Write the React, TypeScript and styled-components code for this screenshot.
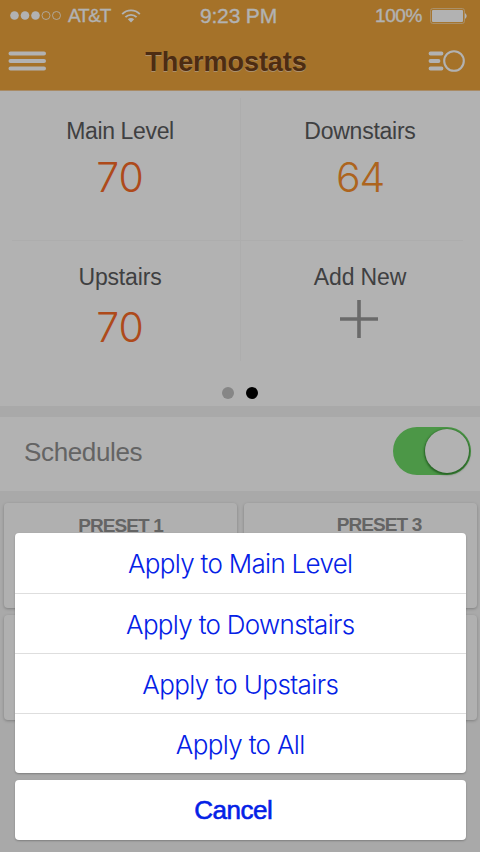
import React from "react";
import styled, { createGlobalStyle } from "styled-components";

const GlobalStyle = createGlobalStyle`
  *, *::before, *::after { box-sizing: border-box; }
  html, body { margin: 0; padding: 0; background: #f2f2f2; }
  body { font-family: "Liberation Sans", Arial, sans-serif; }
  button { font: inherit; border: 0; padding: 0; background: none; }
`;

const Phone = styled.div`
  position: relative;
  width: 480px;
  height: 852px;
  overflow: hidden;
  background: #f2f2f2;
`;

const Header = styled.header`
  height: 91px;
  background: #eca43c;
  border-bottom: 1px solid #f2c791;
  color: #fff;
`;

const StatusBar = styled.div`
  display: grid;
  grid-template-columns: 1fr auto 1fr;
  align-items: center;
  height: 31px;
  padding: 0 13px 0 10px;
`;

const StatusGroup = styled.div<{ $end?: boolean }>`
  display: flex;
  align-items: center;
  justify-content: ${(p) => (p.$end ? "flex-end" : "flex-start")};
`;

const StatusText = styled.span<{ $size: number; $spacing?: number }>`
  font-size: ${(p) => p.$size}px;
  letter-spacing: ${(p) => p.$spacing ?? 0}px;
  line-height: 31px;
  white-space: nowrap;
  -webkit-text-stroke: 0.3px #fff;
`;

const Carrier = styled(StatusText)`
  margin: 0 11px 0 7px;
`;

const Battery = styled.svg`
  margin-left: 8px;
`;

const NavBar = styled.nav`
  display: flex;
  align-items: center;
  justify-content: space-between;
  height: 59px;
  padding: 0 14px 0 8px;
`;

const IconButton = styled.button`
  display: flex;
  width: 39px;
`;

const Title = styled.h1`
  margin: 3px 22px 0 0;
  font-size: 27px;
  line-height: 34px;
  letter-spacing: -0.05px;
  font-weight: 700;
  color: #6f401a;
  text-shadow: 0 1px 0 #f5cf9c;
`;

const Zones = styled.section`
  height: 315px;
  background: #fff;
`;

const ZoneGrid = styled.div`
  display: grid;
  grid-template-columns: 240px 240px;
  grid-template-rows: 150px 120px;
  position: relative;

  &::before {
    content: "";
    position: absolute;
    left: 12px;
    right: 17px;
    top: 149px;
    height: 1px;
    background: #f8f8f8;
  }
  &::after {
    content: "";
    position: absolute;
    left: 240px;
    top: 7px;
    bottom: 0;
    width: 1px;
    background: #f8f8f8;
  }
`;

const Zone = styled.div<{ $lower?: boolean }>`
  display: flex;
  flex-direction: column;
  align-items: center;
  padding-top: ${(p) => (p.$lower ? 22 : 26)}px;
`;

const ZoneName = styled.div<{ $spacing: number }>`
  font-size: 23px;
  line-height: 28px;
  letter-spacing: ${(p) => p.$spacing}px;
  color: #5b5c5e;
`;

const Temperature = styled.div<{ $color: string; $spacing: number; $lower?: boolean }>`
  margin-top: ${(p) => (p.$lower ? 10 : 6)}px;
  font-family: Inter, "Liberation Sans", sans-serif;
  font-weight: 300;
  font-size: 41px;
  line-height: 52px;
  letter-spacing: ${(p) => p.$spacing}px;
  color: ${(p) => p.$color};
`;

const AddIcon = styled.svg`
  margin: 9px 2px 0 0;
`;

const Pager = styled.div`
  display: flex;
  justify-content: center;
  gap: 12px;
  padding-top: 26px;
`;

const PageDot = styled.i<{ $active?: boolean }>`
  width: 12px;
  height: 12px;
  border-radius: 50%;
  background: ${(p) => (p.$active ? "#000" : "#c0c0c0")};
`;

const Schedules = styled.section`
  display: flex;
  align-items: center;
  justify-content: space-between;
  height: 74px;
  margin-top: 11px;
  padding: 0 9.5px 7px 24px;
  background: #fff;
`;

const SchedulesLabel = styled.div`
  padding-top: 3px;
  font-size: 26px;
  letter-spacing: -0.35px;
  line-height: 32px;
  color: #909090;
`;

const Switch = styled.button`
  display: flex;
  justify-content: flex-end;
  width: 78px;
  height: 48px;
  padding: 1px 2px 0 0;
  border-radius: 24px;
  background: #6dd866;
`;

const SwitchKnob = styled.span`
  width: 44px;
  height: 44px;
  margin-top: 1px;
  border-radius: 50%;
  background: #fff;
  box-shadow: 0 1px 2px 1px rgba(0, 70, 0, 0.5);
`;

const Presets = styled.section`
  display: grid;
  grid-template-columns: 233px 233px;
  grid-auto-rows: 105px;
  gap: 7px;
  padding: 12px 4px 0;
`;

const PresetCard = styled.div<{ $raise?: boolean }>`
  padding-top: ${(p) => (p.$raise ? 11 : 12)}px;
  padding-left: ${(p) => (p.$raise ? 37 : 0)}px;
  border-radius: 4px;
  background: #fdfdfd;
  box-shadow: 0 1px 3px rgba(0, 0, 0, 0.25);
  text-align: center;
  font-size: 19px;
  line-height: 21px;
  letter-spacing: -0.9px;
  font-weight: 700;
  color: #909090;
`;

const Backdrop = styled.div`
  position: absolute;
  inset: 0;
  display: flex;
  flex-direction: column;
  justify-content: flex-end;
  gap: 7px;
  padding: 0 14.5px 12px 15px;
  background: rgba(0, 0, 0, 0.3);
`;

const Sheet = styled.div`
  display: flex;
  flex-direction: column;
  border-radius: 4px;
  background: #fff;
  box-shadow: 0 1px 2px rgba(0, 0, 0, 0.25);
`;

const Action = styled.button<{ $spacing: number }>`
  height: 60px;
  padding-top: 1px;
  font-family: Inter, "Liberation Sans", sans-serif;
  font-weight: 300;
  font-size: 26px;
  letter-spacing: ${(p) => p.$spacing}px;
  color: #0421e6;

  & + & {
    border-top: 1px solid #dedede;
  }
`;

const CancelAction = styled(Action)`
  padding: 0 14px 0 0;
  font-family: "Liberation Sans", Arial, sans-serif;
  font-weight: 400;
  -webkit-text-stroke: 0.6px #0421e6;
`;

const zones = [
  { name: "Main Level", temp: "70", color: "#fa6a28", spacing: -0.35, tempSpacing: 0 },
  { name: "Downstairs", temp: "64", color: "#f8902c", spacing: -0.25, tempSpacing: -1.2 },
  { name: "Upstairs", temp: "70", color: "#fa6a28", spacing: -0.15, tempSpacing: 0 },
];

const actions = [
  { label: "Apply to Main Level", spacing: -0.7 },
  { label: "Apply to Downstairs", spacing: -0.7 },
  { label: "Apply to Upstairs", spacing: -0.6 },
  { label: "Apply to All", spacing: -0.65 },
];

function Signal() {
  return (
    <svg width="51" height="11" viewBox="0 0 51 11" fill="#fff">
      <circle cx="4.5" cy="5.5" r="4.3" />
      <circle cx="15" cy="5.5" r="4.3" />
      <circle cx="25.5" cy="5.5" r="4.3" />
      <circle cx="36" cy="5.5" r="4" fill="none" stroke="#fff" strokeWidth=".8" />
      <circle cx="46.5" cy="5.5" r="4" fill="none" stroke="#fff" strokeWidth=".8" />
    </svg>
  );
}

function Wifi() {
  return (
    <svg width="20" height="14" viewBox="0 0 20 14" fill="none" stroke="#fff" strokeWidth="1.9">
      <path d="M1.2 5.1C6 .1 14 .1 18.8 5.1" />
      <path d="M4.4 8.2C7.5 5.1 12.5 5.1 15.6 8.2" />
      <path d="M6.8 10.3C8.7 8.6 11.3 8.6 13.2 10.3L10 13.5Z" fill="#fff" stroke="none" />
    </svg>
  );
}

export default function App() {
  return (
    <>
      <GlobalStyle />
      <Phone>
        <Header>
          <StatusBar>
            <StatusGroup>
              <Signal />
              <Carrier $size={19} $spacing={-1.3}>AT&amp;T</Carrier>
              <Wifi />
            </StatusGroup>
            <StatusText $size={21} $spacing={-0.15}>9:23 PM</StatusText>
            <StatusGroup $end>
              <StatusText $size={19} $spacing={-0.4}>100%</StatusText>
              <Battery width="37" height="16" viewBox="0 0 37 16">
                <rect x=".6" y=".6" width="33.8" height="14.8" rx="2" fill="none" stroke="#f5d39f" />
                <rect x="2" y="2" width="31" height="12" rx="1" fill="#fff" />
                <path d="M35 5Q38.4 8 35 11Z" fill="#fff" />
              </Battery>
            </StatusGroup>
          </StatusBar>
          <NavBar>
            <IconButton aria-label="Menu">
              <svg width="39" height="22" viewBox="0 0 39 22" stroke="#fff" strokeWidth="4" strokeLinecap="round">
                <path d="M2.5 3.5H36M2.5 11H36M2.5 18.5H36" />
              </svg>
            </IconButton>
            <Title>Thermostats</Title>
            <IconButton aria-label="Modes">
              <svg width="39" height="24" viewBox="0 0 39 24" fill="none" stroke="#fff" strokeLinecap="round">
                <path d="M3.5 4.5H14.5M3.5 12H11.5M3.5 19.5H14.5" strokeWidth="3.8" />
                <circle cx="27" cy="12" r="9.8" strokeWidth="2.1" />
              </svg>
            </IconButton>
          </NavBar>
        </Header>
        <Zones>
          <ZoneGrid>
            {zones.map((z, i) => (
              <Zone key={z.name} $lower={i > 1}>
                <ZoneName $spacing={z.spacing}>{z.name}</ZoneName>
                <Temperature $color={z.color} $spacing={z.tempSpacing} $lower={i > 1}>
                  {z.temp}
                </Temperature>
              </Zone>
            ))}
            <Zone $lower>
              <ZoneName $spacing={-0.15}>Add New</ZoneName>
              <AddIcon width="38" height="38" viewBox="0 0 38 38" stroke="#999" strokeWidth="3.6">
                <path d="M19 0V38M0 19H38" />
              </AddIcon>
            </Zone>
          </ZoneGrid>
          <Pager>
            <PageDot />
            <PageDot $active />
          </Pager>
        </Zones>
        <Schedules>
          <SchedulesLabel>Schedules</SchedulesLabel>
          <Switch aria-label="Schedules on">
            <SwitchKnob />
          </Switch>
        </Schedules>
        <Presets>
          <PresetCard>PRESET 1</PresetCard>
          <PresetCard $raise>PRESET 3</PresetCard>
          <PresetCard />
          <PresetCard />
        </Presets>
        <Backdrop>
          <Sheet>
            {actions.map((a) => (
              <Action key={a.label} $spacing={a.spacing}>{a.label}</Action>
            ))}
          </Sheet>
          <Sheet>
            <CancelAction $spacing={-0.5}>Cancel</CancelAction>
          </Sheet>
        </Backdrop>
      </Phone>
    </>
  );
}
